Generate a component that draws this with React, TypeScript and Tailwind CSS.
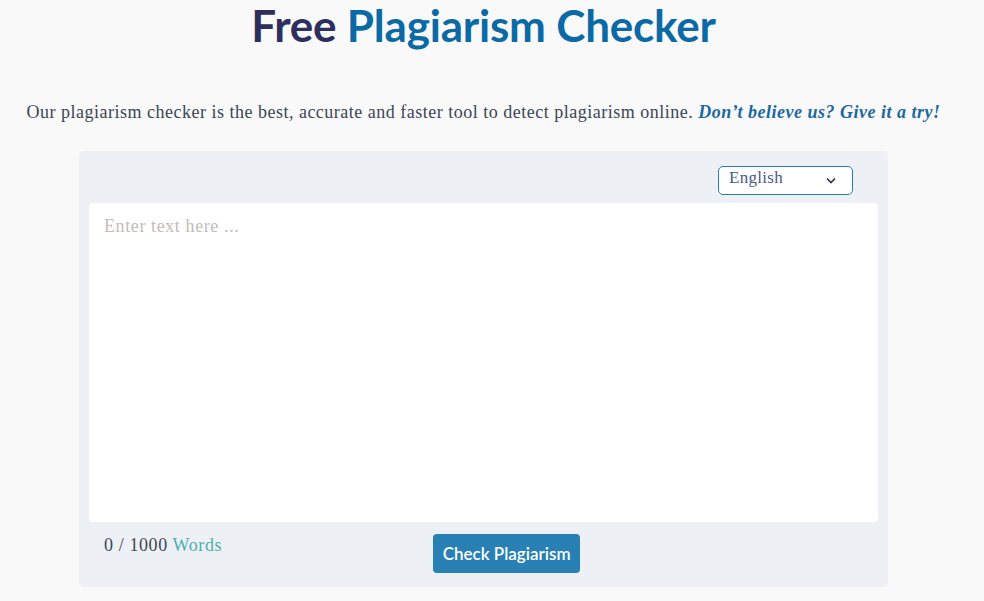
import React from "react";

const serif = { fontFamily: "'Liberation Serif', 'DejaVu Serif', serif" };
const sans = { fontFamily: "Lato, 'Noto Sans', sans-serif" };

export default function App() {
  return (
    <div className="min-h-[601px] w-full bg-[#f9f9f9]">
      <div className="w-[967px]">
        <h1
          className="text-center text-[44px] font-bold leading-[50px] tracking-[-0.2px]"
          style={sans}
        >
          <span className="text-[#2e2f5e]">Free </span>
          <span className="text-[#0b6aa6]">Plagiarism Checker</span>
        </h1>
        <p
          className="mt-[50px] whitespace-nowrap text-center text-[18px] leading-[24px] tracking-[0.5px] text-[#3b4656]"
          style={serif}
        >
          Our plagiarism checker is the best, accurate and faster tool to detect plagiarism online.{" "}
          <span className="font-bold italic text-[#1c68a0]">Don’t believe us? Give it a try!</span>
        </p>
        <div className="mx-auto mt-[27px] flex w-[809px] flex-col rounded-[5px] bg-[#edf1f5] px-[10px] pt-[15px] pb-[14px]">
          <div className="flex justify-end pr-[25px]">
            <div
              className="flex h-[29px] w-[135px] items-center justify-between rounded-[5px] border border-[#2a7db3] bg-white pl-[10px] pr-[16px] text-[17px] tracking-[0.3px] text-[#4a5a86]"
              style={serif}
            >
              <span className="-mt-[6px]">English</span>
              <svg width="10" height="7" viewBox="0 0 10 7" fill="none">
                <path d="M1 1.5 L5 5.5 L9 1.5" stroke="#2e2f5e" strokeWidth="1.6" />
              </svg>
            </div>
          </div>
          <div
            className="mt-[8px] h-[319px] rounded-[4px] bg-white px-[15px] pt-[10px] text-[18px] tracking-[0.6px] text-[#c2bdb8]"
            style={serif}
          >
            Enter text here ...
          </div>
          <div className="mt-[12px] flex h-[39px] items-start">
            <div
              className="pl-[15px] text-[18px] leading-[22px] tracking-[0.6px] text-[#3b4656]"
              style={serif}
            >
              0 / 1000 <span className="text-[#4bb0aa]">Words</span>
            </div>
            <button
              className="ml-[211px] h-[39px] w-[147px] rounded-[4px] bg-[#2880b4] text-[17px] font-semibold text-white"
              style={sans}
            >
              Check Plagiarism
            </button>
          </div>
        </div>
      </div>
    </div>
  );
}
